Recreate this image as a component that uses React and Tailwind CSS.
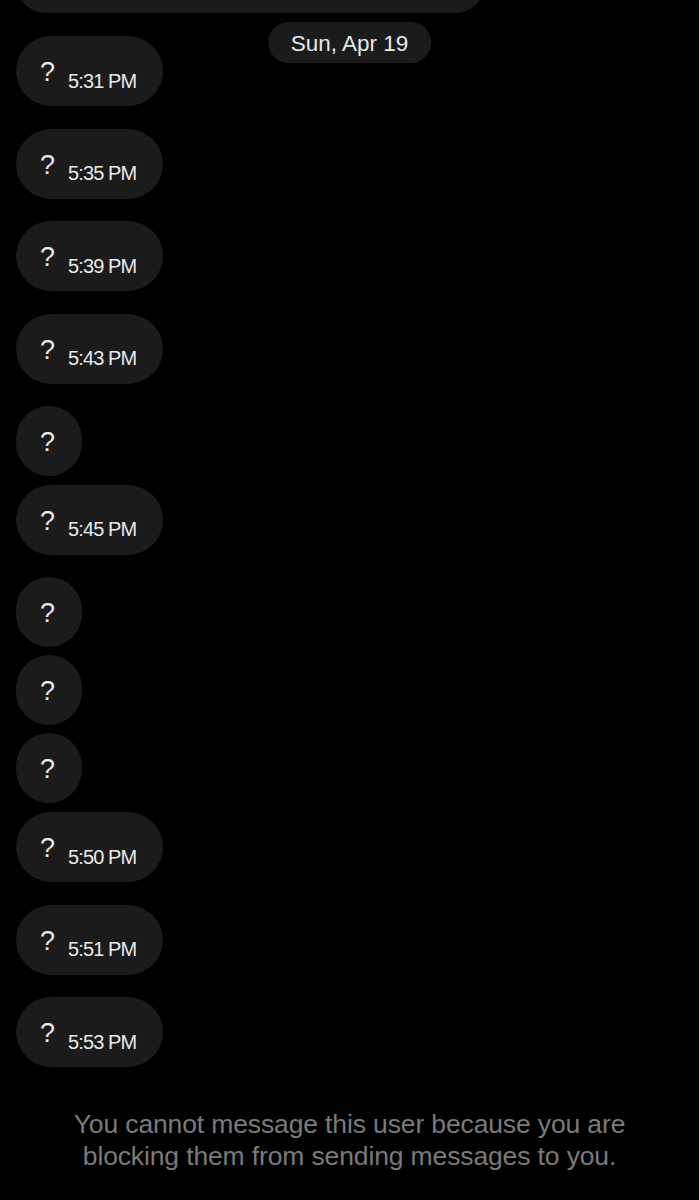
import React from "react";

const msgs = [
  { t: "5:31 PM", gap: 22.5 },
  { t: "5:35 PM", gap: 22.5 },
  { t: "5:39 PM", gap: 22.5 },
  { t: "5:43 PM", gap: 22.5 },
  { t: null, gap: 8.5 },
  { t: "5:45 PM", gap: 22.5 },
  { t: null, gap: 8 },
  { t: null, gap: 8 },
  { t: null, gap: 9 },
  { t: "5:50 PM", gap: 22.5 },
  { t: "5:51 PM", gap: 22.5 },
  { t: "5:53 PM", gap: 0 },
];

function Bubble({ t }) {
  return (
    <div className="flex h-[70px] w-fit items-start rounded-[35px] bg-[#1b1b1b] pl-[24px] pr-[27px] text-[#e7e9ea]">
      <span className="mt-[23px] block text-[27px] leading-none">?</span>
      {t && (
        <span className="ml-[13px] mt-[34.5px] block text-[20px] leading-none tracking-[-0.045em] whitespace-nowrap">
          {t}
        </span>
      )}
    </div>
  );
}

export default function App() {
  return (
    <div
      className="relative h-[1200px] w-[699px] overflow-hidden bg-black"
      style={{ fontFamily: '"Liberation Sans", Arial, sans-serif' }}
    >
      <div className="flex flex-col">
        <div className="ml-[16px] -mt-[47px] h-[60px] w-[469px] rounded-[35px] bg-[#1b1b1b]" />
        <div className="h-[23px]" />
        {msgs.map((m, i) => (
          <div key={i} className="pl-[16px]" style={{ marginBottom: m.gap }}>
            <Bubble t={m.t} />
          </div>
        ))}
        <p className="mt-[41px] text-center text-[26.5px] leading-[32px] tracking-[-0.005em] text-[#7a7a7a]">
          You cannot message this user because you are
          <br />
          blocking them from sending messages to you.
        </p>
      </div>
      <div className="absolute left-1/2 top-[22px] flex h-[41px] -translate-x-1/2 items-center rounded-full bg-[#1b1b1b] px-[23px] pt-[3px] text-[22.5px] leading-none text-[#e7e9ea] whitespace-nowrap">
        Sun, Apr 19
      </div>
    </div>
  );
}
